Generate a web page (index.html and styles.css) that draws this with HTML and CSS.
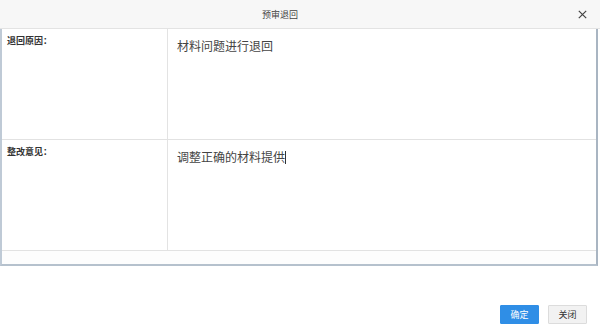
FILE: index.html
```html
<!DOCTYPE html>
<html lang="zh">
<head>
<meta charset="utf-8">
<link rel="stylesheet" href="styles.css">
</head>
<body>
<div class="dialog">
  <div class="header">
    <span class="title">预审退回</span>
    <span class="close">
      <svg width="9" height="9" viewBox="0 0 9 9"><path d="M0.8 0.8L8.2 8.2M8.2 0.8L0.8 8.2" stroke="#444" stroke-width="1.2" fill="none"/></svg>
    </span>
  </div>
  <div class="form">
    <div class="row">
      <div class="label">退回原因：</div>
      <div class="value">材料问题进行退回</div>
    </div>
    <div class="row">
      <div class="label">整改意见：</div>
      <div class="value">调整正确的材料提供<span class="caret"></span></div>
    </div>
    <div class="band"></div>
  </div>
  <div class="footer">
    <button class="btn primary">确定</button>
    <button class="btn">关闭</button>
  </div>
</div>
</body>
</html>
```
FILE: styles.css
```css
html, body {
  margin: 0;
  padding: 0;
  background: #fff;
  font-family: "Noto Sans CJK SC", "Liberation Sans", sans-serif;
}
.dialog {
  width: 600px;
  height: 328px;
  display: flex;
  flex-direction: column;
}
.header {
  height: 28px;
  background: #f7f7f7;
  border-bottom: 1px solid #e3e3e3;
  display: flex;
  align-items: center;
  padding-left: 262px;
  position: relative;
}
.title {
  font-size: 9px;
  color: #444;
}
.close {
  position: absolute;
  right: 13px;
  top: 10px;
  width: 9px;
  height: 9px;
  display: flex;
}
.form {
  width: 594px;
  border-left: 2px solid #bfcad6;
  border-right: 2px solid #a9b5c2;
  border-bottom: 2px solid #b5c1cd;
  display: flex;
  flex-direction: column;
}
.row {
  height: 110px;
  display: flex;
  border-bottom: 1px solid #e2e2e2;
}
.label {
  width: 160px;
  padding: 5px 0 0 5px;
  border-right: 1px solid #e3e3e3;
  font-size: 9px;
  font-weight: bold;
  color: #333;
  line-height: 14px;
}
.value {
  flex: 1;
  padding: 7px 0 0 9px;
  font-size: 12px;
  color: #444;
  line-height: 20px;
}
.caret {
  display: inline-block;
  width: 1px;
  height: 13px;
  background: #333;
  vertical-align: -2px;
}
.band {
  height: 13px;
  background: #fdfdfd;
}
.footer {
  flex: 1;
  display: flex;
  justify-content: flex-end;
  align-items: flex-end;
  gap: 9px;
  padding: 0 13px 4px 0;
}
.btn {
  width: 39px;
  height: 19px;
  padding: 0;
  font-family: "Noto Sans CJK SC", sans-serif;
  font-size: 9px;
  color: #333;
  background: #f2f2f2;
  border: 1px solid #dcdcdc;
  border-radius: 1px;
}
.btn.primary {
  background: #2f8ee6;
  border-color: #2f8ee6;
  color: #fff;
}
```
